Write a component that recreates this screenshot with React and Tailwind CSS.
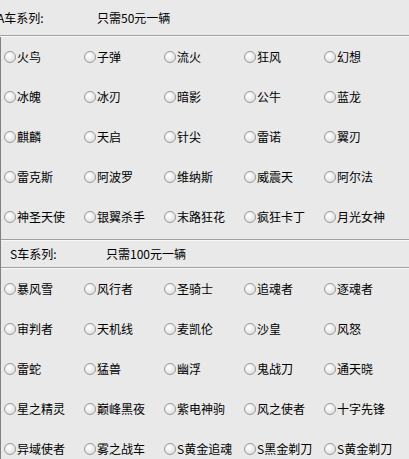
const aCars = [
  "火鸟", "子弹", "流火", "狂风", "幻想",
  "冰魄", "冰刃", "暗影", "公牛", "蓝龙",
  "麒麟", "天启", "针尖", "雷诺", "翼刃",
  "雷克斯", "阿波罗", "维纳斯", "威震天", "阿尔法",
  "神圣天使", "银翼杀手", "末路狂花", "疯狂卡丁", "月光女神",
];

const sCars = [
  "暴风雪", "风行者", "圣骑士", "追魂者", "逐魂者",
  "审判者", "天机线", "麦凯伦", "沙皇", "风怒",
  "雷蛇", "猛兽", "幽浮", "鬼战刀", "通天晓",
  "星之精灵", "巅峰黑夜", "紫电神驹", "风之使者", "十字先锋",
  "异域使者", "雾之战车", "S黄金追魂", "S黑金剃刀", "S黄金剃刀",
];

const Etched = () => (
  <div className="flex flex-col">
    <div className="h-px bg-[#a0a0a0]" />
    <div className="h-px bg-[#f8f8f8]" />
  </div>
);

const Radio = ({ label }) => (
  <label className="flex items-center h-10 whitespace-nowrap">
    <span className="w-3 h-3 rounded-full border border-[#9a9a9a] bg-[radial-gradient(circle_at_40%_35%,#ffffff_0%,#f0f0f0_40%,#d2d2d2_100%)] shrink-0" />
    <span className="ml-px">{label}</span>
  </label>
);

const CarGrid = ({ cars }) => (
  <div className="grid grid-cols-[80px_80px_80px_80px_80px] pl-[3px]">
    {cars.map((c) => (
      <Radio key={c} label={c} />
    ))}
  </div>
);

export default function App() {
  return (
    <div
      className="w-[409px] h-[459px] overflow-hidden bg-[#e9e9e9] text-black text-[12px] leading-none"
      style={{ fontFamily: '"Noto Sans CJK SC", "Liberation Sans", sans-serif' }}
    >
      <div className="h-[35px] flex items-center -ml-[3px]">
        <span className="w-[100px]">A车系列:</span>
        <span>只需50元一辆</span>
      </div>
      <Etched />
      <div className="border-l border-[#808080]">
        <CarGrid cars={aCars} />
        <div className="h-[2px]" />
        <Etched />
        <div className="h-[26px] flex items-center pl-[9px]">
          <span className="w-[96px]">S车系列:</span>
          <span>只需100元一辆</span>
        </div>
        <Etched />
        <CarGrid cars={sCars} />
      </div>
    </div>
  );
}
